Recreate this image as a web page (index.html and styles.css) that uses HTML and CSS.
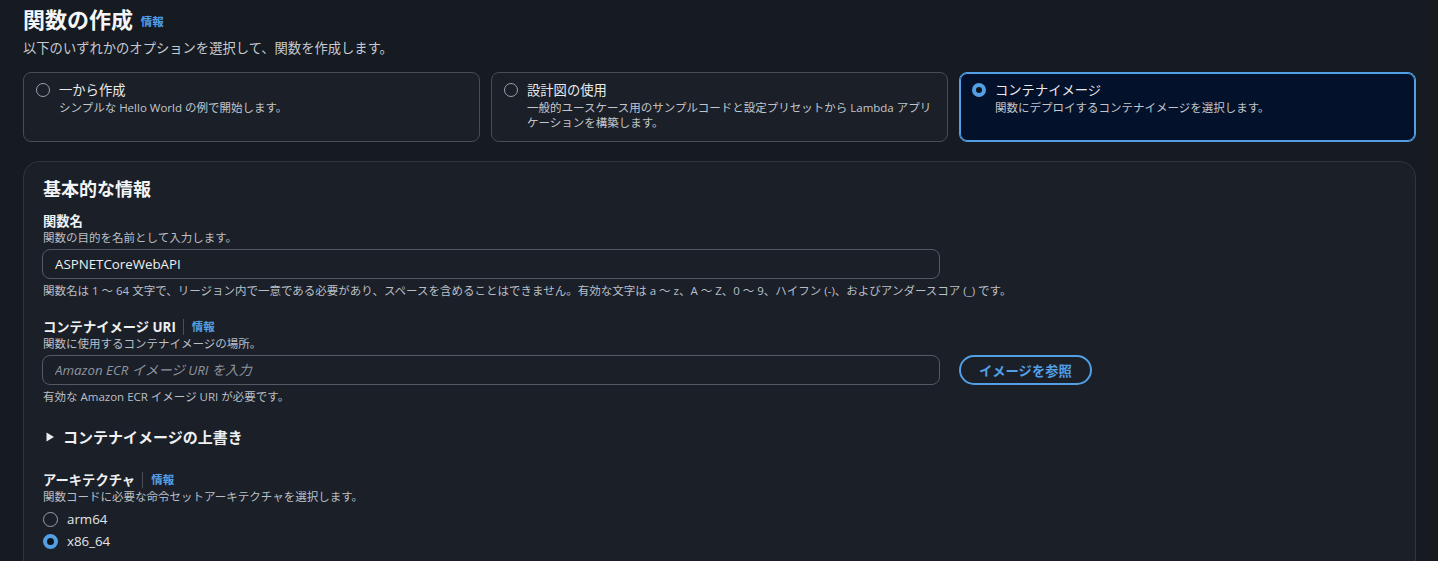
FILE: index.html
```html
<!DOCTYPE html>
<html lang="ja">
  <head>
    <meta charset="UTF-8" />
    <title>関数の作成</title>
    <link rel="stylesheet" href="styles.css">
  </head>
  <body>
    <div class="page">
      <!-- Header -->
      <div class="page-header">
        <h1>関数の作成 <a href="#" class="info">情報</a></h1>
        <p class="page-desc">以下のいずれかのオプションを選択して、関数を作成します。</p>
      </div>

      <!-- Option tiles -->
      <div class="tiles">
        <label class="tile">
          <span class="radio"></span>
          <span class="tile-text">
            <span class="tile-title">一から作成</span>
            <span class="tile-desc">シンプルな Hello World の例で開始します。</span>
          </span>
        </label>
        <label class="tile">
          <span class="radio"></span>
          <span class="tile-text">
            <span class="tile-title">設計図の使用</span>
            <span class="tile-desc">一般的ユースケース用のサンプルコードと設定プリセットから Lambda アプリケーションを構築します。</span>
          </span>
        </label>
        <label class="tile selected">
          <span class="radio checked"></span>
          <span class="tile-text">
            <span class="tile-title">コンテナイメージ</span>
            <span class="tile-desc">関数にデプロイするコンテナイメージを選択します。</span>
          </span>
        </label>
      </div>

      <!-- Basic info -->
      <div class="container">
        <h2>基本的な情報</h2>

        <div class="field">
          <div class="field-label">関数名</div>
          <div class="field-desc">関数の目的を名前として入力します。</div>
          <input type="text" class="text-input" value="ASPNETCoreWebAPI" />
          <div class="field-help">関数名は 1 ～ 64 文字で、リージョン内で一意である必要があり、スペースを含めることはできません。有効な文字は a ～ z、A ～ Z、0 ～ 9、ハイフン (-)、およびアンダースコア (_) です。</div>
        </div>

        <div class="field">
          <div class="field-label">コンテナイメージ URI<span class="divider"></span><a href="#" class="info">情報</a></div>
          <div class="field-desc">関数に使用するコンテナイメージの場所。</div>
          <div class="input-row">
            <input type="text" class="text-input" placeholder="Amazon ECR イメージ URI を入力" />
            <button class="btn">イメージを参照</button>
          </div>
          <div class="field-help">有効な Amazon ECR イメージ URI が必要です。</div>
        </div>

        <div class="expand">
          <svg width="10" height="12" viewBox="0 0 10 12"><path d="M1.5 1.5 L9 6 L1.5 10.5 Z" fill="#e9ebed"/></svg>
          <span>コンテナイメージの上書き</span>
        </div>

        <div class="field">
          <div class="field-label">アーキテクチャ<span class="divider"></span><a href="#" class="info">情報</a></div>
          <div class="field-desc">関数コードに必要な命令セットアーキテクチャを選択します。</div>
          <div class="radio-group">
            <label class="radio-item"><span class="radio"></span>arm64</label>
            <label class="radio-item"><span class="radio checked"></span>x86_64</label>
          </div>
        </div>
      </div>
    </div>
  </body>
</html>
```

FILE: styles.css
```css
/* General Styles */
body {
  font-family: "Open Sans", "Noto Sans CJK JP", sans-serif;
  margin: 0;
  padding: 0;
  background-color: #161a21;
  color: #e9ebed;
  overflow: hidden;
}
.page {
  padding: 5px 22px 0 23px;
}
h1 {
  margin: 0;
  font-size: 22px;
  line-height: 28px;
  font-weight: 700;
  color: #f4f5f6;
}
.info {
  color: #539fe5;
  font-size: 11.5px;
  font-weight: 700;
  text-decoration: none;
}
h1 .info {
  margin-left: 2px;
  vertical-align: 2px;
}
.page-desc {
  margin: 2px 0 0;
  font-size: 13.3px;
  line-height: 20px;
  color: #c6cbd2;
}

/* Tiles */
.tiles {
  display: grid;
  grid-template-columns: repeat(3, 1fr);
  gap: 11px;
  margin-top: 14px;
}
.tile {
  display: flex;
  gap: 9px;
  height: 70px;
  box-sizing: border-box;
  padding: 7px 12px;
  border: 1px solid #474c55;
  border-radius: 8px;
  background: #1b1f27;
}
.tile.selected {
  border-color: #539fe5;
  box-shadow: inset 0 0 0 1px #539fe5;
  background: #03112a;
}
.tile-text {
  display: flex;
  flex-direction: column;
}
.tile-title {
  font-size: 13.3px;
  line-height: 20px;
  color: #e9ebed;
}
.tile-desc {
  font-size: 11.5px;
  line-height: 15px;
  color: #c1c6cd;
}
.radio {
  flex: none;
  width: 14px;
  height: 14px;
  box-sizing: border-box;
  border: 1.5px solid #9aa1ab;
  border-radius: 50%;
  margin-top: 3px;
}
.radio.checked {
  border: 4px solid #539fe5;
  background: #0f141a;
}

/* Container */
.container {
  margin-top: 19px;
  padding: 14px 20px 40px 19px;
  border: 1px solid #30353d;
  border-radius: 16px;
  background: #1b1f27;
}
h2 {
  margin: 0;
  font-size: 18px;
  line-height: 26px;
  font-weight: 700;
  color: #f4f5f6;
}
.field {
  margin-top: 10px;
}
.field + .field {
  margin-top: 19px;
}
.field-label {
  display: flex;
  align-items: center;
  font-size: 13.3px;
  line-height: 18px;
  font-weight: 700;
  color: #eef0f2;
}
.divider {
  display: inline-block;
  width: 1px;
  height: 16px;
  background: #4a4f57;
  margin: 0 8px 0 7px;
}
.field-desc,
.field-help {
  font-size: 11.5px;
  line-height: 16px;
  color: #b9bfc7;
}
.text-input {
  display: block;
  width: 898px;
  height: 30px;
  box-sizing: border-box;
  margin: 3px 0 4px -1px;
  padding: 0 12px;
  border: 1px solid #535a65;
  border-radius: 8px;
  background: #1b1f27;
  color: #eef0f2;
  font-family: inherit;
  font-size: 13.3px;
  outline: none;
}
.text-input::placeholder {
  color: #8d95a0;
  font-style: italic;
}
.input-row {
  display: flex;
  align-items: center;
  gap: 19px;
}
.btn {
  height: 30px;
  padding: 0 18px;
  border: 2px solid #539fe5;
  border-radius: 20px;
  background: transparent;
  color: #539fe5;
  font-family: inherit;
  font-size: 13.3px;
  font-weight: 700;
  margin-top: -1px;
}
.expand {
  display: flex;
  align-items: center;
  gap: 8px;
  margin: 21px 0 0 2px;
  font-size: 15px;
  line-height: 22px;
  font-weight: 700;
  color: #eef0f2;
}
.expand + .field {
  margin-top: 23px;
}
.radio-group {
  margin-top: 3px;
}
.radio-item {
  display: flex;
  align-items: center;
  gap: 9px;
  height: 22px;
  font-size: 13.3px;
  color: #e2e5e8;
}
.radio-item .radio {
  margin-top: 0;
  width: 15px;
  height: 15px;
}
```
